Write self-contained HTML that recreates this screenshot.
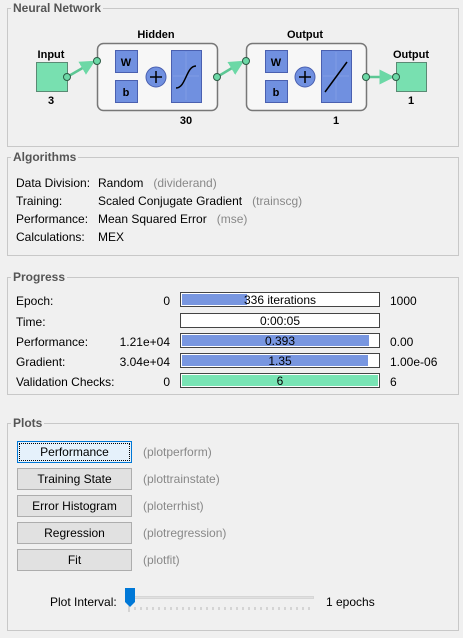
<!DOCTYPE html>
<html><head><style>
*{margin:0;padding:0;box-sizing:border-box}
body{width:463px;height:638px;background:#f0f0f0;font-family:"Liberation Sans",sans-serif;font-size:12px;color:#000;position:relative;overflow:hidden}
.a{position:absolute;white-space:nowrap}
.panel{position:absolute;border:1px solid #c8c8c8}
.title{position:absolute;font-weight:bold;color:#555;background:#f0f0f0;padding:0 2px;font-size:12px}
.g{color:#888}
.bar{position:absolute;left:180px;width:200px;height:15px;border:1px solid #444;background:#fff}
.bar i{position:absolute;left:1px;top:1px;bottom:1px;background:#7896e0}
.bar span{position:absolute;left:0;right:0;top:0;text-align:center;line-height:14px}
.r{text-align:right;width:80px}
.btn{position:absolute;left:17px;width:115px;height:22px;border:1px solid #adadad;background:#e1e1e1;text-align:center;line-height:20px}
</style></head><body>
<div class="panel" style="left:7px;top:8px;width:452px;height:139px"></div>
<div class="title" style="left:11px;top:1px">Neural Network</div>
<svg class="a" style="left:0;top:0" width="463" height="150" font-family="Liberation Sans" font-weight="bold" font-size="11">
<defs><marker id="ar" markerWidth="6" markerHeight="6" refX="5" refY="3" orient="auto"><path d="M0,0L6,3L0,6z" fill="#6cd8a6"/></marker></defs>
<g stroke="#5cc794" stroke-width="2.5" fill="none">
<path d="M67,77L93,62" marker-end="url(#ar)"/>
<path d="M97,61H115"/><path d="M137,61C148,61 150,70 150,72"/><path d="M137,91C148,91 150,84 150,82"/>
<path d="M166,77H171"/><path d="M201,77H213" marker-end="url(#ar)"/>
<path d="M217,77L242,62" marker-end="url(#ar)"/>
<path d="M246,61H265"/><path d="M287,61C298,61 300,70 300,72"/><path d="M287,91C298,91 300,84 300,82"/>
<path d="M315,77H321"/><path d="M351,77H362" marker-end="url(#ar)"/>
<path d="M366,77H392" marker-end="url(#ar)"/>
</g>
<rect x="36.5" y="62.5" width="31" height="29" fill="#78e0b0" stroke="#5a8a74"/>
<rect x="396.5" y="62.5" width="30" height="29" fill="#78e0b0" stroke="#5a8a74"/>
<rect x="97.5" y="43.5" width="120" height="67" rx="6" fill="#f7f7f7" stroke="#777" stroke-width="1.5"/>
<rect x="246.5" y="43.5" width="120" height="67" rx="6" fill="#f7f7f7" stroke="#777" stroke-width="1.5"/>
<g stroke="#4a60b0" fill="#7090e0">
<rect x="115.5" y="50.5" width="22" height="22"/><rect x="115.5" y="80.5" width="22" height="22"/>
<rect x="171.5" y="50.5" width="30" height="52"/>
<rect x="265.5" y="50.5" width="22" height="22"/><rect x="265.5" y="80.5" width="22" height="22"/>
<rect x="321.5" y="50.5" width="30" height="52"/>
<circle cx="156" cy="77" r="10"/><circle cx="305" cy="77" r="10"/>
</g>
<g stroke="#8fa6ea" stroke-width="0.5"><path d="M186,52V100M173,76H199M336,52V100M323,76H349"/></g>
<g stroke="#000" stroke-width="1.5" fill="none">
<path d="M150,77H162M156,71V83M299,77H311M305,71V83"/>
<path d="M176,88C186,88 186,66 196,66"/><path d="M325,92L347,62"/>
</g>
<g fill="#6cd8a6" stroke="#2c5a44"><circle cx="67" cy="77" r="3.5"/><circle cx="97" cy="61" r="3.5"/><circle cx="217" cy="77" r="3.5"/><circle cx="246" cy="61" r="3.5"/><circle cx="366" cy="77" r="3.5"/><circle cx="396" cy="77" r="3.5"/></g>
<g text-anchor="middle">
<text x="126" y="66">W</text><text x="126" y="96">b</text><text x="276" y="66">W</text><text x="276" y="96">b</text>
<text x="51" y="58">Input</text><text x="51" y="104">3</text>
<text x="156" y="38">Hidden</text><text x="186" y="124">30</text>
<text x="305" y="38">Output</text><text x="336" y="124">1</text>
<text x="411" y="58">Output</text><text x="411" y="104">1</text>
</g></svg>

<div class="panel" style="left:7px;top:157px;width:452px;height:99px"></div>
<div class="title" style="left:11px;top:150px">Algorithms</div>
<div class="a" style="left:16px;top:176px">Data Division:</div><div class="a" style="left:98px;top:176px">Random &nbsp;&nbsp;<span class="g">(dividerand)</span></div>
<div class="a" style="left:16px;top:194px">Training:</div><div class="a" style="left:98px;top:194px">Scaled Conjugate Gradient &nbsp;&nbsp;<span class="g">(trainscg)</span></div>
<div class="a" style="left:16px;top:212px">Performance:</div><div class="a" style="left:98px;top:212px">Mean Squared Error &nbsp;&nbsp;<span class="g">(mse)</span></div>
<div class="a" style="left:16px;top:230px">Calculations:</div><div class="a" style="left:98px;top:230px">MEX</div>

<div class="panel" style="left:7px;top:277px;width:452px;height:118px"></div>
<div class="title" style="left:11px;top:270px">Progress</div>
<div class="a" style="left:16px;top:294px">Epoch:</div><div class="a r" style="left:90px;top:294px">0</div>
<div class="bar" style="top:292px"><i style="width:65px"></i><span>336 iterations</span></div><div class="a" style="left:390px;top:294px">1000</div>
<div class="a" style="left:16px;top:315px">Time:</div>
<div class="bar" style="top:313px"><span>0:00:05</span></div>
<div class="a" style="left:16px;top:335px">Performance:</div><div class="a r" style="left:90px;top:335px">1.21e+04</div>
<div class="bar" style="top:333px"><i style="width:187px"></i><span>0.393</span></div><div class="a" style="left:390px;top:335px">0.00</div>
<div class="a" style="left:16px;top:355px">Gradient:</div><div class="a r" style="left:90px;top:355px">3.04e+04</div>
<div class="bar" style="top:353px"><i style="width:186px"></i><span>1.35</span></div><div class="a" style="left:390px;top:355px">1.00e-06</div>
<div class="a" style="left:16px;top:375px">Validation Checks:</div><div class="a r" style="left:90px;top:375px">0</div>
<div class="bar" style="top:373px"><i style="width:196px;background:#78e4b4"></i><span>6</span></div><div class="a" style="left:390px;top:375px">6</div>

<div class="panel" style="left:7px;top:423px;width:452px;height:208px"></div>
<div class="title" style="left:11px;top:416px">Plots</div>
<div class="btn" style="top:441px;border-color:#0078d7;background:#e5f1fb;outline:1px dotted #000;outline-offset:-3px">Performance</div><div class="a g" style="left:143px;top:445px">(plotperform)</div>
<div class="btn" style="top:468px">Training State</div><div class="a g" style="left:143px;top:472px">(plottrainstate)</div>
<div class="btn" style="top:495px">Error Histogram</div><div class="a g" style="left:143px;top:499px">(ploterrhist)</div>
<div class="btn" style="top:522px">Regression</div><div class="a g" style="left:143px;top:526px">(plotregression)</div>
<div class="btn" style="top:549px">Fit</div><div class="a g" style="left:143px;top:553px">(plotfit)</div>
<div class="a" style="left:50px;top:595px">Plot Interval:</div>
<div class="a" style="left:128px;top:596px;width:186px;height:3px;background:#e0e0e0;border:1px solid #d6d6d6"></div>
<svg class="a" style="left:124px;top:587px" width="195" height="26">
<path d="M1,1H11V15L6,20L1,15Z" fill="#0078d7"/>
<g stroke="#b8b8b8"><path d="M5,19V25M311,19V25"/>
<path d="M11,20V23M17,20V23M23,20V23M29,20V23M35,20V23M41,20V23M47,20V23M53,20V23M59,20V23M65,20V23M71,20V23M77,20V23M83,20V23M89,20V23M95,20V23M101,20V23M107,20V23M113,20V23M119,20V23M125,20V23M131,20V23M137,20V23M143,20V23M149,20V23M155,20V23M161,20V23M167,20V23M173,20V23M179,20V23M185,20V23"/></g></svg>
<div class="a" style="left:326px;top:595px">1 epochs</div>
</body></html>
